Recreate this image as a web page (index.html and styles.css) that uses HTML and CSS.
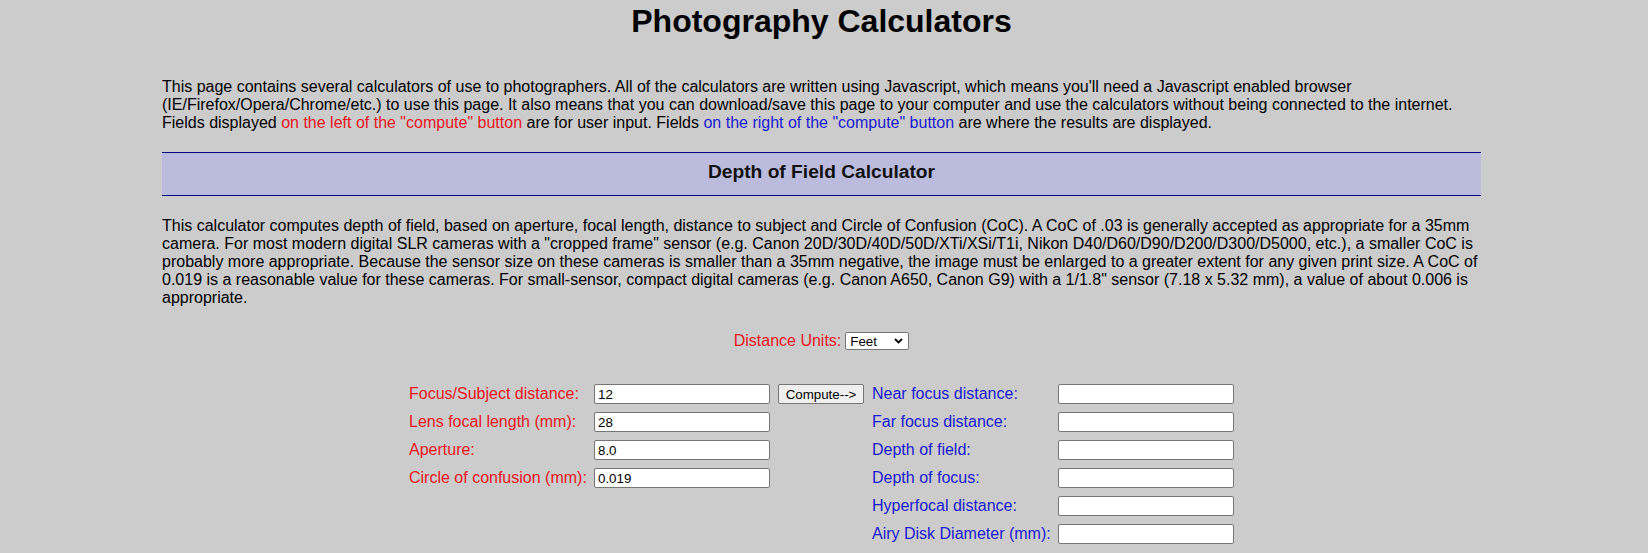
FILE: index.html
```html
<!DOCTYPE html>
<html lang="en">
<head>
<meta charset="utf-8">
<title>Photography Calculators</title>
<link rel="stylesheet" href="styles.css">
</head>
<body>
<div class="page">
  <h1 class="title">Photography Calculators</h1>
  <p class="intro">This page contains several calculators of use to photographers. All of the calculators are written using Javascript, which means you'll need a Javascript enabled browser<br>(IE/Firefox/Opera/Chrome/etc.) to use this page. It also means that you can download/save this page to your computer and use the calculators without being connected to the internet.<br>Fields displayed <span class="in">on the left of the "compute" button</span> are for user input. Fields <span class="out">on the right of the "compute" button</span> are where the results are displayed.</p>

  <h2 class="band">Depth of Field Calculator</h2>

  <p class="desc">This calculator computes depth of field, based on aperture, focal length, distance to subject and Circle of Confusion (CoC). A CoC of .03 is generally accepted as appropriate for a 35mm<br>camera. For most modern digital SLR cameras with a "cropped frame" sensor (e.g. Canon 20D/30D/40D/50D/XTi/XSi/T1i, Nikon D40/D60/D90/D200/D300/D5000, etc.), a smaller CoC is<br>probably more appropriate. Because the sensor size on these cameras is smaller than a 35mm negative, the image must be enlarged to a greater extent for any given print size. A CoC of<br>0.019 is a reasonable value for these cameras. For small-sensor, compact digital cameras (e.g. Canon A650, Canon G9) with a 1/1.8" sensor (7.18 x 5.32 mm), a value of about 0.006 is<br>appropriate.</p>

  <div class="units">
    <label class="in" for="units">Distance Units:</label>
    <span class="select-wrap">
      <select id="units" class="unit-select">
        <option>Feet</option>
        <option>Meters</option>
      </select>
      <svg class="chevron" width="9" height="6" viewBox="0 0 9 6" aria-hidden="true"><path d="M1 1 L4.5 4.5 L8 1" fill="none" stroke="#000" stroke-width="1.8"/></svg>
    </span>
  </div>

  <div class="calc">
    <label class="in">Focus/Subject distance:</label>
    <input class="field" type="text" value="12">
    <button class="compute" type="button">Compute--&gt;</button>
    <label class="out">Near focus distance:</label>
    <input class="field" type="text" value="">

    <label class="in">Lens focal length (mm):</label>
    <input class="field" type="text" value="28">
    <span></span>
    <label class="out">Far focus distance:</label>
    <input class="field" type="text" value="">

    <label class="in">Aperture:</label>
    <input class="field" type="text" value="8.0">
    <span></span>
    <label class="out">Depth of field:</label>
    <input class="field" type="text" value="">

    <label class="in">Circle of confusion (mm):</label>
    <input class="field" type="text" value="0.019">
    <span></span>
    <label class="out">Depth of focus:</label>
    <input class="field" type="text" value="">

    <span></span><span></span><span></span>
    <label class="out">Hyperfocal distance:</label>
    <input class="field" type="text" value="">

    <span></span><span></span><span></span>
    <label class="out">Airy Disk Diameter (mm):</label>
    <input class="field" type="text" value="">
  </div>
</div>
</body>
</html>
```
FILE: styles.css
```css
html, body {
  margin: 0;
  padding: 0;
  background: #cccccc;
}

body {
  font-family: "Liberation Sans", Arial, sans-serif;
  font-size: 16px;
  color: #000;
}

.page {
  width: 1319px;
  margin: 0 0 0 162px;
}

.title {
  font-size: 32px;
  font-weight: bold;
  text-align: center;
  margin: 3px 0 38px;
  line-height: normal;
}

.intro {
  margin: 0;
}

.in {
  color: #e8141e;
}

.out {
  color: #1a1ad0;
}

.band {
  margin: 20px 0 21px;
  padding: 8px 0 12px;
  background: #bbbbdd;
  border-top: 1px solid #000080;
  border-bottom: 1px solid #000080;
  font-size: 19.2px;
  line-height: 22px;
  font-weight: bold;
  text-align: center;
  color: #111;
}

.desc {
  margin: 0;
}

.units {
  display: flex;
  justify-content: center;
  align-items: center;
  gap: 4px;
  margin-top: 25px;
  height: 18px;
}

.select-wrap {
  position: relative;
  display: inline-flex;
}

.unit-select {
  -webkit-appearance: none;
  appearance: none;
  box-sizing: border-box;
  width: 64px;
  height: 18px;
  margin: 0;
  font-family: "Liberation Sans", Arial, sans-serif;
  font-size: 13.33px;
  background: #fff;
  border: 1px solid #767676;
  border-radius: 2px;
  padding: 0 0 0 4px;
  color: #000;
}

.chevron {
  position: absolute;
  right: 6px;
  top: 6px;
  pointer-events: none;
}

.calc {
  display: grid;
  grid-template-columns: 177px 176px 86px 178px 176px;
  grid-auto-rows: 20px;
  column-gap: 8px;
  row-gap: 8px;
  align-items: center;
  justify-content: center;
  margin-top: 34px;
}

.calc label {
  white-space: nowrap;
  line-height: 18px;
}

.field {
  box-sizing: border-box;
  width: 176px;
  height: 20px;
  margin: 0;
  padding: 0 3px;
  border: 1px solid #767676;
  border-radius: 2px;
  background: #fff;
  font-family: "Liberation Sans", Arial, sans-serif;
  font-size: 13.33px;
  color: #000;
}

.compute {
  box-sizing: border-box;
  width: 86px;
  height: 20px;
  margin: 0;
  padding: 0;
  border: 1px solid #767676;
  border-radius: 2px;
  background: #efefef;
  font-family: "Liberation Sans", Arial, sans-serif;
  font-size: 13.33px;
  color: #000;
}
```
